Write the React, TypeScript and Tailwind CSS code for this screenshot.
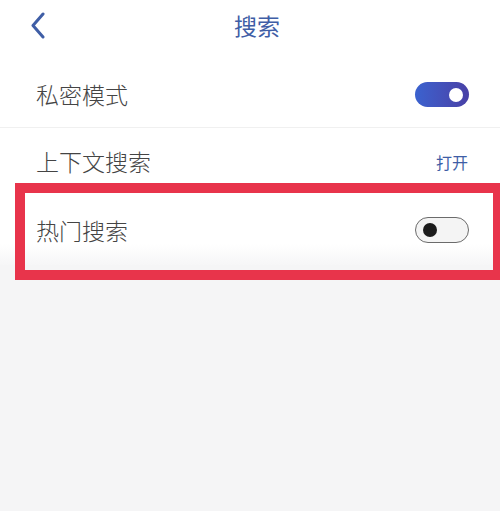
import { useState } from 'react';

const FONT = { fontFamily: '"Noto Sans CJK SC", "Noto Sans", sans-serif' };

function Toggle({ on, onClick }: { on: boolean; onClick: () => void }) {
  if (on) {
    return (
      <button
        onClick={onClick}
        className="flex h-[25px] w-[54px] items-center justify-end rounded-full bg-gradient-to-r from-[#3a62cf] to-[#4840a6] pr-[6px]"
      >
        <span className="h-[14px] w-[14px] rounded-full bg-white" />
      </button>
    );
  }
  return (
    <button
      onClick={onClick}
      className="flex h-[26px] w-[54px] items-center rounded-full border-[1.5px] border-[#6b6b6b] bg-[#f4f4f4] pl-[7px]"
    >
      <span className="h-[14px] w-[14px] rounded-full bg-[#1c1c1c]" />
    </button>
  );
}

export default function App() {
  const [privateMode, setPrivateMode] = useState(true);
  const [hotSearch, setHotSearch] = useState(false);

  return (
    <div className="relative h-[511px] w-[500px] overflow-hidden bg-[#f5f5f6]" style={FONT}>
      {/* header */}
      <header className="h-[62px] bg-white shadow-[0_1px_3px_rgba(0,0,0,0.1)]">
        <div className="relative flex h-[50px] items-center justify-center">
          <button className="absolute left-[29px] top-[12px] flex h-[27px] w-[18px] items-center justify-center">
            <svg width="16" height="27" viewBox="0 0 16 27" fill="none">
              <path d="M13 2 L3 13.5 L13 25" stroke="#3f5ea6" strokeWidth="3" strokeLinecap="round" strokeLinejoin="round" />
            </svg>
          </button>
          <h1 className="ml-[14px] text-[23px] leading-none text-[#3f5ea6]">搜索</h1>
        </div>
      </header>

      <div className="bg-white">
        <div className="flex h-[66px] items-center justify-between border-b border-[#f0f0f0] pl-[36px] pr-[31px]">
          <span className="text-[23px] font-light text-[#444]">私密模式</span>
          <Toggle on={privateMode} onClick={() => setPrivateMode(!privateMode)} />
        </div>
        <div className="flex h-[67px] items-center justify-between pl-[36px] pr-[32px]">
          <span className="text-[23px] font-light text-[#444]">上下文搜索</span>
          <span className="text-[16px] text-[#3f5ea6]">打开</span>
        </div>
        <div className="flex h-[70px] items-center justify-between bg-gradient-to-b from-white from-70% to-[#f6f6f7] pl-[36px] pr-[31px]">
          <span className="text-[23px] font-light text-[#444]">热门搜索</span>
          <Toggle on={hotSearch} onClick={() => setHotSearch(!hotSearch)} />
        </div>
      </div>

      {/* annotation box */}
      <div className="pointer-events-none absolute left-[15px] top-[183px] box-content border-[10px] border-[#e8344b]" style={{ width: 468, height: 77 }} />
    </div>
  );
}
